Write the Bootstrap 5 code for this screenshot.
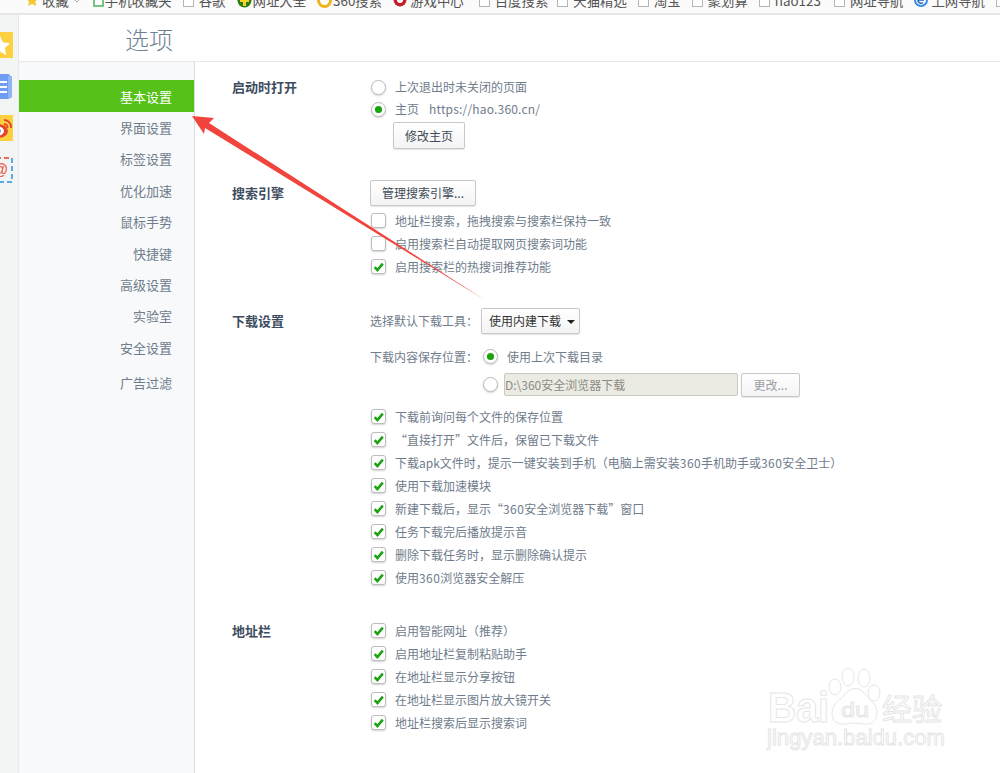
<!DOCTYPE html>
<html lang="zh">
<head>
<meta charset="utf-8">
<title>选项</title>
<link href="https://cdn.jsdelivr.net/npm/bootstrap@5.3.0/dist/css/bootstrap.min.css" rel="stylesheet">
<style>
html,body{height:773px;overflow:hidden;background:#fff}
body{font-family:"Noto Sans CJK SC","Liberation Sans",sans-serif;font-size:12px;color:#6f7c8b;position:relative}
.bmbar{height:15px;overflow:hidden;background:#fbfbfb;border-bottom:2px solid #e6e6e6;flex:none}
.bmrow{margin-top:-9px;height:18px;padding-left:25px;gap:11px;font-size:13.4px;line-height:18px;color:#555;white-space:nowrap}
.bmitem{display:flex;align-items:center;gap:3px}
.bmitem.tight{gap:1px}
.bmitem.pull2{margin-left:-2px}
.bmitem.push2{margin-left:2px}
.bmitem svg{flex:none}
.pg{width:11px;height:13px;border:1px solid #b5b5b5;background:#fff;display:block;flex:none;margin-right:2px}
.strip{width:19px;flex:none;background:#f3f4f4;border-right:1px solid #e9e9e9;padding-top:17px;gap:16px;overflow:hidden}
.strip svg{display:block;margin-left:-13px}
.ttl{height:47px;flex:none;border-bottom:1px solid #e6e8ea;padding-left:106px;font-size:24px;line-height:47px;color:#6e7f93;font-weight:300}
.side{width:176px;flex:none;background:#f8f9fb;border-right:1px solid #d8dadd;padding-top:18px}
.side a{display:block;height:31.4px;line-height:32px;text-align:right;padding-right:22px;font-size:13px;color:#6f7c8b;text-decoration:none}
.side a.act{height:32px;line-height:34px;background:#56c118;color:#fff}
.side a.gapped{margin-top:3.500px}
.pane{padding:14px 0 0 37px;min-width:0}
.sect{display:flex}
.lbl{width:138px;flex:none;font-size:13px;line-height:22px;font-weight:700;color:#3d4c5e}
.lbl.low{line-height:24px}
.lbl.tall{line-height:26px}
.lbl.mid{line-height:25px}
.s2{margin-top:31px}.s3{margin-top:30px}.s4{margin-top:30px}
.rw{height:23px;display:flex;align-items:center;white-space:nowrap}
.rw.th{height:22px}
.form-check-input.ck,.form-check-input.rd{width:15px;height:15px;margin:0 9px 0 1px;flex:none;border:1px solid #bdbdbd;background-color:#fff;box-shadow:0 1px 2px rgba(0,0,0,.18)}
.form-check-input.ck{border-radius:3px}
.form-check-input.ck:checked{background-color:#fff;border-color:#bdbdbd;background-size:14px;background-image:url("data:image/svg+xml,%3csvg xmlns='http://www.w3.org/2000/svg' viewBox='0 0 16 16'%3e%3cpath fill='none' stroke='%231ba20f' stroke-width='2.8' d='M3.500 8.500l3 3.200 6-7.200'/%3e%3c/svg%3e")}
.form-check-input.rd:checked{background-color:#fff;border-color:#bdbdbd;background-size:15px;background-image:url("data:image/svg+xml,%3csvg xmlns='http://www.w3.org/2000/svg' viewBox='0 0 16 16'%3e%3ccircle cx='8' cy='8' r='3.800' fill='%231ba20f'/%3e%3c/svg%3e")}
.btn.gbtn{font-size:12px;line-height:16px;padding:0 11px;height:27px;color:#3f4b57;background:linear-gradient(#fff,#f4f4f4);border:1px solid #c8c8c8;border-radius:2px;box-shadow:0 1px 1px rgba(0,0,0,.1);white-space:nowrap}
.btn.h26{height:26px}
.btn.gbtn.dropdown-toggle{padding:0 4px 0 7px;color:#333;margin-left:-1px}
.chg{margin-left:23px;margin-top:2px}
.mt4x{margin-top:3px}
.pick{width:112px;flex:none}
.r2{margin-top:11px}
.r3{margin-top:5px}
.r4{margin-top:9px}
.url{margin-left:10px;letter-spacing:.18px}
.dg{letter-spacing:.4px}
.pathbox{width:234px;height:23px;margin-left:-3px;background:#ebebe4;border:1px solid #c9c9c0;border-radius:2px;padding:0;font-size:12px;line-height:21px;color:#8b8b85;box-shadow:none}
.btn.more{width:59px;height:24px;margin-left:3px;padding:0;color:#9aa0a6;font-size:12px}
.dropdown-toggle::after{vertical-align:.15em;margin-left:6px;border-top-width:.38em;border-right-width:.34em;border-left-width:.34em;color:#222}
.arrow{position:absolute;left:0;top:0;pointer-events:none}
.wm{position:absolute;left:760px;top:660px;pointer-events:none}
.wm text{fill:#fff;stroke:#e6e6e6;stroke-width:1;font-family:"Liberation Sans",sans-serif}
.wm text.cjk{font-family:"Noto Sans CJK SC",sans-serif}
.wm ellipse,.wm path{fill:#fff;stroke:#e6e6e6}
.icn{font-family:"Liberation Sans",sans-serif;font-weight:700}
</style>
</head>
<body class="d-flex flex-column">
<div class="bmbar">
 <div class="d-flex bmrow">
  <span class="bmitem"><svg width="14" height="14" viewBox="0 0 14 14"><path d="M7 1l2 4 4.500.5-3.300 3 1 4.500L7 10.700 3 13l1-4.500L.6 5.500 5 5z" fill="#f6c733"/></svg>收藏 <svg width="10" height="8" viewBox="0 0 10 8"><path d="M1 2l4 4 4-4" fill="none" stroke="#aaa"/></svg></span>
  <span class="bmitem tight"><svg width="11" height="14" viewBox="0 0 11 14"><rect x="1" y="0" width="9" height="13" fill="#fff" stroke="#49b45a" stroke-width="1.500"/></svg>手机收藏夹</span>
  <span class="bmitem"><i class="pg"></i>谷歌</span>
  <span class="bmitem tight"><svg width="15" height="15" viewBox="0 0 15 15"><circle cx="7.500" cy="7.500" r="7" fill="#2a7d12"/><path d="M7.500 2v11M3 7.500h9" stroke="#f6d22c" stroke-width="3"/></svg>网址大全</span>
  <span class="bmitem tight"><svg width="15" height="15" viewBox="0 0 15 15"><circle cx="7.500" cy="7.500" r="6" fill="none" stroke="#f2b21c" stroke-width="3"/></svg>360搜索</span>
  <span class="bmitem"><svg width="14" height="14" viewBox="0 0 14 14"><circle cx="7" cy="7" r="6.500" fill="#c4202a"/><circle cx="7" cy="7" r="3" fill="#fff"/></svg>游戏中心</span>
  <span class="bmitem ms-1"><i class="pg"></i>百度搜索</span>
  <span class="bmitem pull2"><i class="pg"></i>天猫精选</span>
  <span class="bmitem"><i class="pg"></i>淘宝</span>
  <span class="bmitem"><i class="pg"></i>聚划算</span>
  <span class="bmitem"><i class="pg"></i>hao123</span>
  <span class="bmitem push2"><i class="pg"></i>网址导航</span>
  <span class="bmitem"><svg width="14" height="15" viewBox="0 0 14 15"><circle cx="7" cy="7" r="6" fill="#fff" stroke="#3a8ee6" stroke-width="2"/><path d="M4 7h6M10 7a3 3 0 1 0-1 2.500" fill="none" stroke="#1e63c6" stroke-width="1.500"/></svg>上网导航</span>
  <span class="bmitem"><i class="pg"></i></span>
 </div>
</div>
<div class="d-flex flex-grow-1" style="min-height:0">
 <div class="strip d-flex flex-column">
  <svg width="27" height="26" viewBox="0 0 27 26"><rect width="26" height="26" rx="1" fill="#fcd03f"/><path d="M13 4l3 6.500 7 .8-5.200 4.700 1.400 7L13 19.500 6.800 23l1.400-7L3 11.300l7-.8z" fill="#fff"/></svg>
  <svg width="27" height="25" viewBox="0 0 27 25"><rect x="4" width="19" height="25" rx="2" fill="#6f9df4"/><rect x="21" y="2" width="4" height="22" rx="1" fill="#8fb4f7"/><path d="M8 8h12M8 13h12M8 18h12" stroke="#fff" stroke-width="2.200"/></svg>
  <svg width="27" height="26" viewBox="0 0 27 26"><rect width="26" height="26" rx="1" fill="#fcd03f"/><ellipse cx="11" cy="16" rx="10" ry="7" fill="#e5442f"/><ellipse cx="11" cy="16" rx="6" ry="4.500" fill="#fff"/><circle cx="11" cy="16" r="2.500" fill="#222"/><path d="M17 5a7 7 0 0 1 7 8M17 9a3.500 3.500 0 0 1 3.500 4" fill="none" stroke="#e5442f" stroke-width="1.800"/></svg>
  <svg width="27" height="26" viewBox="0 0 27 26"><path d="M1 25V1h24" fill="none" stroke="#ee6a5a" stroke-width="2" stroke-dasharray="5 3"/><path d="M25 1v24H1" fill="none" stroke="#5aa9ee" stroke-width="2" stroke-dasharray="5 3"/><text class="icn" x="13" y="18" font-size="16" text-anchor="middle" fill="#e9604f">@</text></svg>
 </div>
 <div class="d-flex flex-column flex-grow-1" style="min-width:0">
  <div class="ttl">选项</div>
  <div class="d-flex flex-grow-1" style="min-height:0">
   <nav class="side">
    <a class="act" href="#">基本设置</a>
    <a href="#">界面设置</a>
    <a href="#">标签设置</a>
    <a href="#">优化加速</a>
    <a href="#">鼠标手势</a>
    <a href="#">快捷键</a>
    <a href="#">高级设置</a>
    <a href="#">实验室</a>
    <a href="#">安全设置</a>
    <a class="gapped" href="#">广告过滤</a>
   </nav>
   <main class="pane flex-grow-1">
    <section class="sect">
     <div class="lbl">启动时打开</div>
     <div>
      <div class="rw th"><input class="form-check-input rd" type="radio" name="a">上次退出时未关闭的页面</div>
      <div class="rw th"><input class="form-check-input rd" type="radio" name="a" checked>主页<span class="url">https://hao.360.cn/</span></div>
      <button class="btn gbtn chg" type="button">修改主页</button>
     </div>
    </section>
    <section class="sect s2">
     <div class="lbl tall">搜索引擎</div>
     <div>
      <button class="btn gbtn h26" type="button">管理搜索引擎...</button>
      <div class="rw mt4x"><input class="form-check-input ck" type="checkbox">地址栏搜索，拖拽搜索与搜索栏保持一致</div>
      <div class="rw"><input class="form-check-input ck" type="checkbox">启用搜索栏自动提取网页搜索词功能</div>
      <div class="rw"><input class="form-check-input ck" type="checkbox" checked>启用搜索栏的热搜词推荐功能</div>
     </div>
    </section>
    <section class="sect s3">
     <div class="lbl mid">下载设置</div>
     <div>
      <div class="d-flex align-items-center"><span class="pick">选择默认下载工具：</span><button class="btn gbtn h26 dropdown-toggle" type="button">使用内建下载</button></div>
      <div class="rw r2"><span class="pick">下载内容保存位置：</span><input class="form-check-input rd" type="radio" name="b" checked>使用上次下载目录</div>
      <div class="rw r3"><span class="pick"></span><input class="form-check-input rd" type="radio" name="b"><span class="pathbox">D:\360安全浏览器下载</span><button class="btn gbtn more" type="button">更改...</button></div>
      <div class="rw r4"><input class="form-check-input ck" type="checkbox" checked>下载前询问每个文件的保存位置</div>
      <div class="rw"><input class="form-check-input ck" type="checkbox" checked>“直接打开”文件后，保留已下载文件</div>
      <div class="rw"><input class="form-check-input ck" type="checkbox" checked>下载apk文件时，提示一键安装到手机（电脑上需安装<span class="dg">360</span>手机助手或<span class="dg">360</span>安全卫士）</div>
      <div class="rw"><input class="form-check-input ck" type="checkbox" checked>使用下载加速模块</div>
      <div class="rw"><input class="form-check-input ck" type="checkbox" checked>新建下载后，显示“<span class="dg">360</span>安全浏览器下载”窗口</div>
      <div class="rw"><input class="form-check-input ck" type="checkbox" checked>任务下载完后播放提示音</div>
      <div class="rw"><input class="form-check-input ck" type="checkbox" checked>删除下载任务时，显示删除确认提示</div>
      <div class="rw"><input class="form-check-input ck" type="checkbox" checked>使用<span class="dg">360</span>浏览器安全解压</div>
     </div>
    </section>
    <section class="sect s4">
     <div class="lbl low">地址栏</div>
     <div>
      <div class="rw"><input class="form-check-input ck" type="checkbox" checked>启用智能网址（推荐）</div>
      <div class="rw"><input class="form-check-input ck" type="checkbox" checked>启用地址栏复制粘贴助手</div>
      <div class="rw"><input class="form-check-input ck" type="checkbox" checked>在地址栏显示分享按钮</div>
      <div class="rw"><input class="form-check-input ck" type="checkbox" checked>在地址栏显示图片放大镜开关</div>
      <div class="rw"><input class="form-check-input ck" type="checkbox" checked>地址栏搜索后显示搜索词</div>
     </div>
    </section>
   </main>
  </div>
 </div>
</div>
<svg class="arrow" width="1000" height="773" viewBox="0 0 1000 773"><polygon points="192,116 214,118 209,123 485,300 205,128 204,134" fill="#f1443c"/></svg>
<svg class="wm" width="200" height="100" viewBox="0 0 200 100">
 <ellipse cx="75" cy="27" rx="6" ry="8"/>
 <ellipse cx="88" cy="17" rx="6" ry="9"/>
 <ellipse cx="104" cy="18" rx="6" ry="9"/>
 <ellipse cx="114" cy="33" rx="6" ry="8"/>
 <path d="M72 53c0-10 10-14 14-20 5-6 14-6 18 0 4 6 13 10 13 20 0 9-7 12-13 11-6-1-13-1-19 0-7 1-13-2-13-11z"/>
 <text x="8" y="62" font-size="42" font-weight="700" textLength="61" lengthAdjust="spacingAndGlyphs">Bai</text>
 <text x="81" y="57" font-size="20" textLength="28" lengthAdjust="spacingAndGlyphs">du</text>
 <text class="cjk" x="122" y="60" font-size="30">经验</text>
 <text x="7" y="85" font-size="22" textLength="178" lengthAdjust="spacingAndGlyphs">jingyan.baidu.com</text>
</svg>
<script src="https://cdn.jsdelivr.net/npm/bootstrap@5.3.0/dist/js/bootstrap.bundle.min.js"></script>
</body>
</html>
